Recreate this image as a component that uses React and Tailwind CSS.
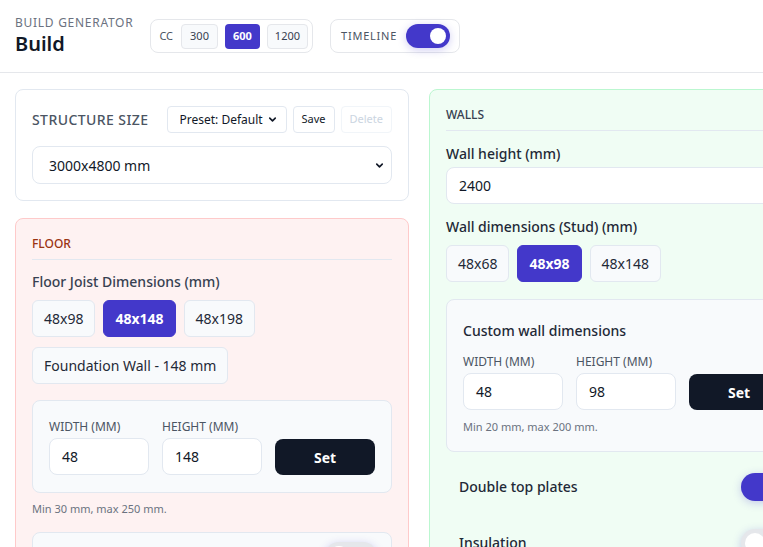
import { ChevronDown } from "lucide-react";

const font = { fontFamily: '"Noto Sans", "Segoe UI", sans-serif' };

function Toggle({ on, small }) {
  const size = small ? "w-11 h-6" : "w-[52px] h-7";
  const knob = small ? "w-4 h-4" : "w-5 h-5";
  return (
    <div
      className={`${size} shrink-0 rounded-full flex items-center px-1 shadow-[0_2px_8px_rgba(67,56,202,0.25)] ${
        on ? "bg-[#4338ca] justify-end" : "bg-[#e5e7eb] justify-start"
      }`}
    >
      <div className={`${knob} rounded-full bg-white`} />
    </div>
  );
}

function Chip({ label, active }) {
  return (
    <button
      className={`h-[37px] rounded-md border text-[14px] px-[11px] ${
        active
          ? "bg-[#4338ca] border-[#4338ca] text-white font-bold"
          : "bg-[#f8fafc] border-[#e2e8f0] text-[#1f2937]"
      }`}
    >
      {label}
    </button>
  );
}

function CustomDims({ title, w, h, hint }) {
  return (
    <div
      className={`rounded-lg border border-[#e2e8f0] bg-[#f8fafc] px-[16px] pt-[17px] ${
        hint ? "pb-[15px]" : "pb-[17px]"
      }`}
    >
      {title && (
        <div className="text-[14px] font-medium text-[#1f2937] mb-[12px] mt-[3px]">{title}</div>
      )}
      <div className="flex items-end gap-[13px]">
        <div className="flex flex-col gap-[2px]">
          <span className="text-[12px] uppercase text-[#4b5563]">Width (mm)</span>
          <div className="w-[100px] h-[37px] rounded-lg border border-[#e2e8f0] bg-white flex items-center px-3 text-[14px] text-[#111827]">
            {w}
          </div>
        </div>
        <div className="flex flex-col gap-[2px]">
          <span className="text-[12px] uppercase text-[#4b5563]">Height (mm)</span>
          <div className="w-[100px] h-[37px] rounded-lg border border-[#e2e8f0] bg-white flex items-center px-3 text-[14px] text-[#111827]">
            {h}
          </div>
        </div>
        <button className="w-[100px] h-[36px] rounded-lg bg-[#111827] text-white text-[14px] font-bold">
          Set
        </button>
      </div>
      {hint && <div className="text-[11px] text-[#6b7280] mt-[9px]">{hint}</div>}
    </div>
  );
}

export default function App() {
  return (
    <div className="w-[763px] h-[547px] overflow-hidden bg-white" style={font}>
      <header className="h-[73px] border-b border-[#e5e7eb] flex items-center gap-[17px] px-[15px]">
        <div className="flex flex-col">
          <span className="text-[12px] tracking-[0.06em] uppercase text-[#6b7280] leading-4">
            Build Generator
          </span>
          <span className="text-[20px] font-semibold text-[#111827] leading-7 -mt-[1px]">Build</span>
        </div>
        <div className="flex items-center gap-[7px] h-[34px] rounded-lg border border-[#e5e7eb] px-[4px] pl-[8px]">
          <span className="text-[11px] text-[#4b5563] mr-[1px]">CC</span>
          <button className="h-[25px] px-2 rounded border border-[#e5e7eb] bg-[#f8fafc] text-[11px] text-[#374151]">
            300
          </button>
          <button className="h-[25px] px-2 rounded bg-[#4338ca] text-[11px] font-bold text-white">
            600
          </button>
          <button className="h-[25px] px-[7px] rounded border border-[#e5e7eb] bg-[#f8fafc] text-[11px] text-[#374151]">
            1200
          </button>
        </div>
        <div className="flex items-center gap-[9px] h-[34px] rounded-lg border border-[#e5e7eb] pl-[10px] pr-[9px]">
          <span className="text-[11px] tracking-[0.07em] text-[#4b5563]">TIMELINE</span>
          <Toggle on small />
        </div>
      </header>

      <main className="flex gap-[20px] px-[15px] pt-[16px] w-[900px]">
        <div className="w-[394px] flex flex-col gap-[17px]">
          <section className="rounded-lg border border-[#e2e8f0] bg-white px-[16px] pt-[16px] pb-[16px]">
            <div className="flex items-center gap-[6px]">
              <span className="text-[14px] font-medium tracking-[0.03em] text-[#4b5563] mr-auto">
                STRUCTURE SIZE
              </span>
              <div className="w-[120px] h-[27px] rounded border border-[#e2e8f0] bg-white flex items-center justify-between pl-[12px] pr-[8px] text-[12px] text-[#111827]">
                Preset: Default
                <ChevronDown size={11} strokeWidth={3.5} />
              </div>
              <button className="h-[27px] px-[8px] rounded border border-[#e2e8f0] bg-white text-[11px] text-[#111827]">
                Save
              </button>
              <button className="h-[27px] px-[8px] rounded border border-[#f1f5f9] bg-white text-[11px] text-[#cbd5e1]">
                Delete
              </button>
            </div>
            <div className="mt-[13px] h-[38px] rounded-lg border border-[#e2e8f0] bg-white flex items-center justify-between pl-[16px] pr-[6px] text-[14px] text-[#111827]">
              3000x4800 mm
              <ChevronDown size={11} strokeWidth={3.5} />
            </div>
          </section>

          <section className="rounded-lg border border-[#fecaca] bg-[#fef2f2] px-[16px] pt-[16px] pb-[16px]">
            <div className="text-[12px] font-medium text-[#9a3412] pb-[6px] border-b border-[#e2e8f0]">
              FLOOR
            </div>
            <div className="text-[14px] font-medium text-[#374151] mt-[11px] mb-[8px]">
              Floor Joist Dimensions (mm)
            </div>
            <div className="flex flex-wrap gap-x-[8px] gap-y-[10px] w-[230px]">
              <Chip label="48x98" />
              <Chip label="48x148" active />
              <Chip label="48x198" />
              <Chip label="Foundation Wall - 148 mm" />
            </div>
            <div className="mt-[16px]">
              <CustomDims w="48" h="148" />
            </div>
            <div className="text-[11px] text-[#6b7280] mt-[8px]">Min 30 mm, max 250 mm.</div>
            <div className="mt-[14px] h-[60px] rounded-lg border border-[#e2e8f0] bg-[#f8fafc] flex items-start justify-end px-[14px] pt-[9px]">
              <Toggle />
            </div>
          </section>
        </div>

        <div className="w-[394px] flex flex-col">
          <section className="rounded-lg border border-[#bbf7d0] bg-[#f0fdf4] px-[16px] pt-[16px] pb-[16px] h-[600px]">
            <div className="text-[12px] font-medium text-[#374151] pb-[6px] border-b border-[#e2e8f0]">
              WALLS
            </div>
            <div className="text-[14px] font-medium text-[#1f2937] mt-[12px] mb-[3px]">
              Wall height (mm)
            </div>
            <div className="h-[37px] rounded-lg border border-[#e2e8f0] bg-white flex items-center px-[12px] text-[14px] text-[#111827]">
              2400
            </div>
            <div className="text-[14px] font-medium text-[#1f2937] mt-[12px] mb-[8px]">
              Wall dimensions (Stud) (mm)
            </div>
            <div className="flex gap-[8px]">
              <Chip label="48x68" />
              <Chip label="48x98" active />
              <Chip label="48x148" />
            </div>
            <div className="mt-[17px]">
              <CustomDims
                title="Custom wall dimensions"
                w="48"
                h="98"
                hint="Min 20 mm, max 200 mm."
              />
            </div>
            <div className="flex items-center justify-between px-[13px] h-[56px] mt-[7px]">
              <span className="text-[14px] font-medium text-[#1f2937]">Double top plates</span>
              <Toggle on />
            </div>
            <div className="flex items-center justify-between px-[13px] h-[56px]">
              <span className="text-[14px] font-medium text-[#1f2937]">Insulation</span>
              <Toggle />
            </div>
          </section>
        </div>
      </main>
    </div>
  );
}
